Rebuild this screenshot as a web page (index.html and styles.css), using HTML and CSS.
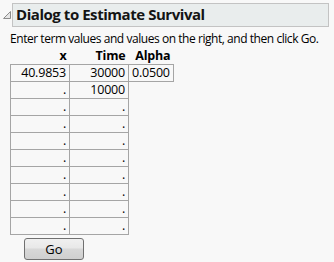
FILE: index.html
```html
<!DOCTYPE html>
<html>
<head>
<meta charset="utf-8">
<link rel="stylesheet" href="styles.css">
</head>
<body>
<div class="outline">
  <div class="head">
    <svg class="tri" width="9" height="9" viewBox="0 0 9 9"><path d="M0.5 8.5 L7.5 1.5 L7.5 8.5 Z" fill="#e6e6e6" stroke="#8c8c8c" stroke-width="1"/></svg>
    <div class="title">Dialog to Estimate Survival</div>
  </div>
  <div class="content">
    <div class="note">Enter term values and values on the right, and then click Go.</div>
    <table class="grid">
      <thead>
        <tr><th class="cx">x</th><th class="ct">Time</th><th class="ca">Alpha</th></tr>
      </thead>
      <tbody>
        <tr><td class="cell">40.9853</td><td class="cell">30000</td><td class="cell">0.0500</td></tr>
        <tr><td class="cell">.</td><td class="cell">10000</td><td></td></tr>
        <tr><td class="cell">.</td><td class="cell">.</td><td></td></tr>
        <tr><td class="cell">.</td><td class="cell">.</td><td></td></tr>
        <tr><td class="cell">.</td><td class="cell">.</td><td></td></tr>
        <tr><td class="cell">.</td><td class="cell">.</td><td></td></tr>
        <tr><td class="cell">.</td><td class="cell">.</td><td></td></tr>
        <tr><td class="cell">.</td><td class="cell">.</td><td></td></tr>
        <tr><td class="cell">.</td><td class="cell">.</td><td></td></tr>
        <tr><td class="cell">.</td><td class="cell">.</td><td></td></tr>
      </tbody>
    </table>
    <button class="go">Go</button>
  </div>
</div>
</body>
</html>
```
FILE: styles.css
```css
html, body {
  margin: 0;
  padding: 0;
  background: #f8f8f8;
}
body {
  font-family: "Open Sans", "Noto Sans", sans-serif;
  color: #000;
  width: 334px;
  height: 262px;
  overflow: hidden;
}
.outline {
  padding: 3px 0 0 3px;
}
.head {
  display: flex;
  align-items: flex-start;
}
.tri {
  margin-top: 7px;
  flex: none;
}
.title {
  box-sizing: border-box;
  width: 317px;
  height: 24px;
  border: 1px solid #c3c3c3;
  background: #e9eded;
  font-weight: bold;
  font-size: 15px;
  line-height: 21px;
  padding-left: 3px;
  color: #141414;
  letter-spacing: -0.45px;
}
.content {
  padding-left: 7px;
}
.note {
  font-size: 12px;
  line-height: 18px;
  margin-top: 3px;
  letter-spacing: -0.45px;
  white-space: nowrap;
}
.grid {
  border-collapse: collapse;
  font-size: 12.5px;
  letter-spacing: -0.2px;
}
.grid th {
  font-weight: bold;
  text-align: right;
  height: 16px;
  padding: 0 3px;
  line-height: 16px;
  border: none;
}
.grid td {
  height: 16px;
  padding: 0 3px;
  line-height: 16px;
  text-align: right;
}
.grid td.cell {
  border: 1px solid #a5a5a5;
}
.cx { width: 53px; }
.ct { width: 53px; }
.ca { width: 36px; }
.go {
  display: block;
  margin: 3px 0 0 14px;
  width: 60px;
  height: 22px;
  border: 1px solid #707070;
  border-radius: 3px;
  background: linear-gradient(#f0f0f0 0%, #e8e8e8 45%, #d8d8d8 50%, #cfcfcf 100%);
  font-family: "Open Sans", "Noto Sans", sans-serif;
  font-size: 13px;
  color: #000;
  padding: 0;
}
```
